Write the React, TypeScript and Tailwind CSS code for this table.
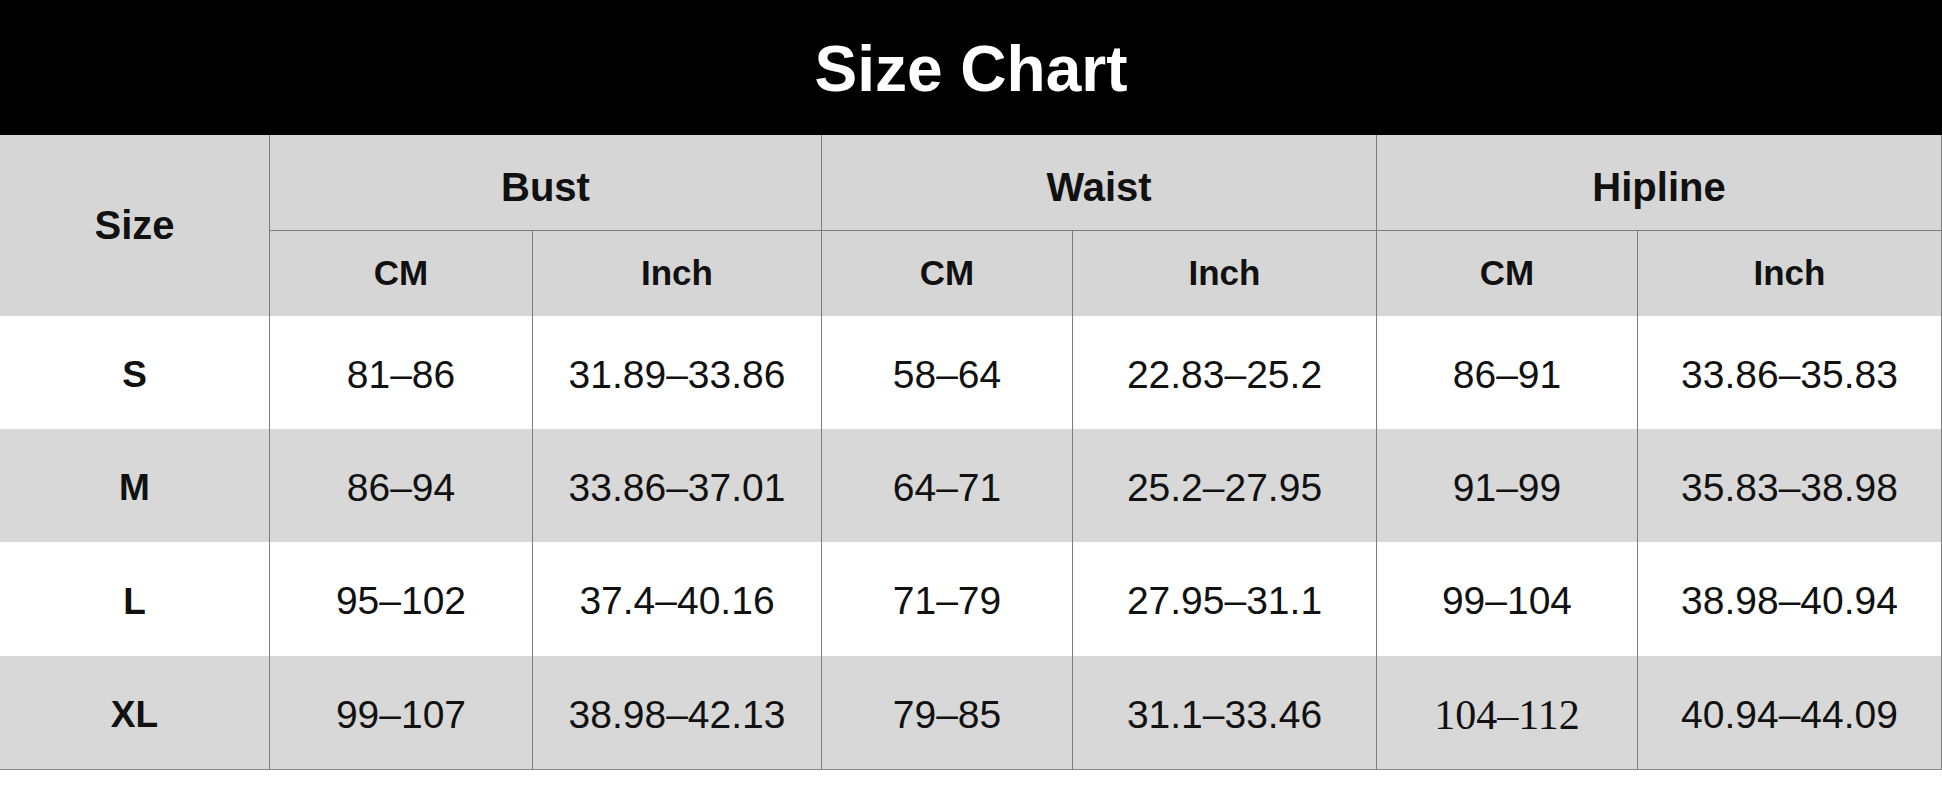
import React from "react";

const rows = [
  { size: "S", bg: "bg-white", vals: ["81–86", "31.89–33.86", "58–64", "22.83–25.2", "86–91", "33.86–35.83"] },
  { size: "M", bg: "bg-[#d8d8d8]", vals: ["86–94", "33.86–37.01", "64–71", "25.2–27.95", "91–99", "35.83–38.98"] },
  { size: "L", bg: "bg-white", vals: ["95–102", "37.4–40.16", "71–79", "27.95–31.1", "99–104", "38.98–40.94"] },
  { size: "XL", bg: "bg-[#d8d8d8]", vals: ["99–107", "38.98–42.13", "79–85", "31.1–33.46", "104–112", "40.94–44.09"] },
];

export default function App() {
  return (
    <div className="w-[1942px] h-[809px] bg-white font-['Liberation_Sans',Arial,sans-serif] text-[#111]">
      <div className="h-[135px] bg-black flex items-center justify-center">
        <h1 className="text-white font-bold text-[64px] leading-none pt-[2px]">Size Chart</h1>
      </div>
      <div className="grid grid-cols-[269px_263px_289px_251px_304px_261px_305px] grid-rows-[96px_85px_113px_113px_114px_114px]">
        <div className="row-span-2 bg-[#d6d6d6] flex items-center justify-center font-bold text-[40px] pb-[2px]">Size</div>
        <div className="col-span-2 bg-[#d6d6d6] border-l border-b border-[#7d7d7d] flex items-center justify-center font-bold text-[40px] pt-[8px]">Bust</div>
        <div className="col-span-2 bg-[#d6d6d6] border-l border-b border-[#7d7d7d] flex items-center justify-center font-bold text-[40px] pt-[8px]">Waist</div>
        <div className="col-span-2 bg-[#d6d6d6] border-l border-r border-b border-[#7d7d7d] flex items-center justify-center font-bold text-[40px] pt-[8px]">Hipline</div>
        {["CM", "Inch", "CM", "Inch", "CM", "Inch"].map((t, i) => (
          <div
            key={i}
            className={`bg-[#d6d6d6] border-l border-[#7d7d7d] flex items-center justify-center font-bold text-[35px] ${i === 5 ? "border-r" : ""}`}
          >
            {t}
          </div>
        ))}
        {rows.map((r, ri) => (
          <React.Fragment key={r.size}>
            <div className={`${r.bg} ${ri === 3 ? "border-b border-[#8a8a8a]" : ""} flex items-center justify-center font-bold text-[37px] pt-[5px]`}>
              {r.size}
            </div>
            {r.vals.map((v, vi) => (
              <div
                key={vi}
                className={`${r.bg} border-l border-[#7d7d7d] ${vi === 5 ? "border-r" : ""} ${ri === 3 ? "border-b border-b-[#8a8a8a]" : ""} flex items-center justify-center pt-[5px]`}
              >
                {ri === 3 && vi === 4 ? (
                  <span className="font-['Liberation_Serif','Times_New_Roman',serif] text-[42px]">{v}</span>
                ) : (
                  <span className="text-[39px]">{v}</span>
                )}
              </div>
            ))}
          </React.Fragment>
        ))}
      </div>
    </div>
  );
}
